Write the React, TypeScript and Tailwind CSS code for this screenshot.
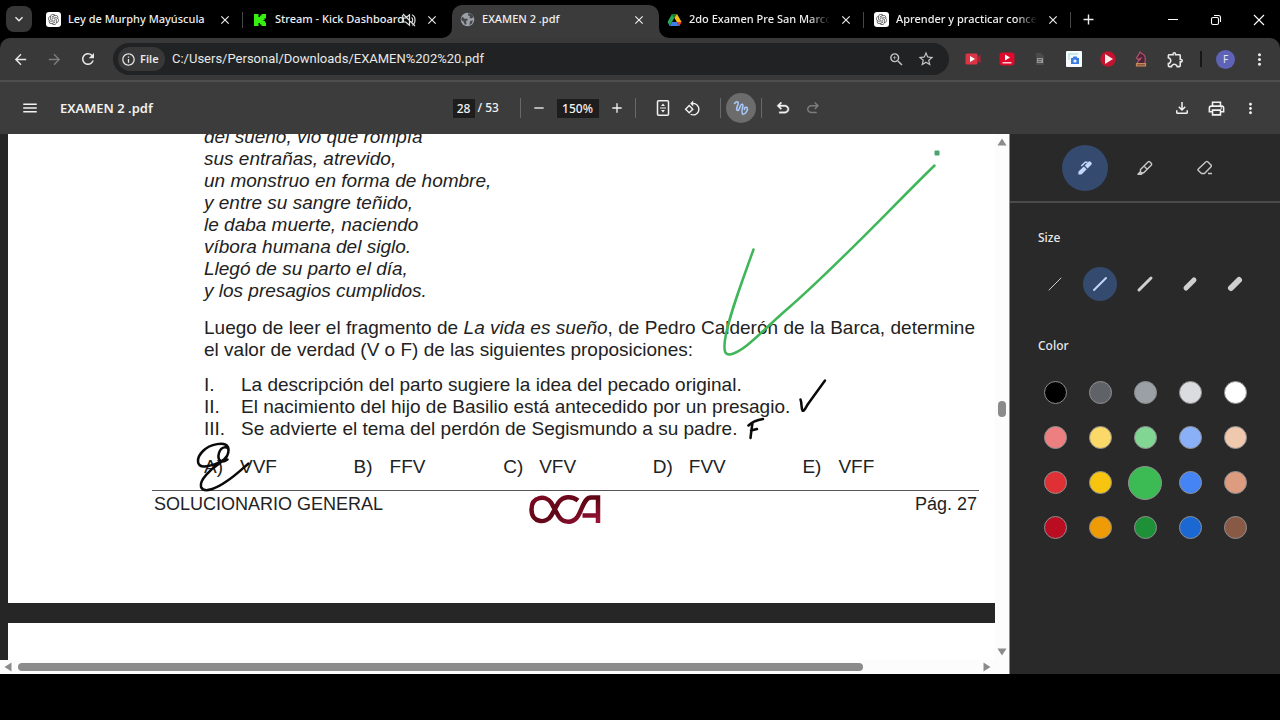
import type { ReactNode } from "react";
import {
  MdAdd,
  MdArrowBack,
  MdArrowForward,
  MdClose,
  MdKeyboardArrowDown,
  MdMenu,
  MdMoreVert,
  MdOutlineExtension,
  MdOutlineFileDownload,
  MdOutlineInfo,
  MdOutlinePrint,
  MdRefresh,
  MdRemove,
  MdRotate90DegreesCcw,
  MdStarBorder,
  MdZoomIn,
} from "react-icons/md";
import { RiOpenaiFill } from "react-icons/ri";

const uiFont = "font-['Noto_Sans','Open_Sans',sans-serif]";

function OpenAiIcon() {
  return (
    <span className="flex size-[15px] items-center justify-center rounded-[3px] bg-white text-[#555]">
      <RiOpenaiFill size={13} />
    </span>
  );
}

function KickIcon() {
  return (
    <svg width="14" height="14" viewBox="0 0 14 14" fill="#35f011">
      <path d="M1 1h4.500v3H7V2.500h1.500V1H13v4.500h-1.500V7H10.500v1H12v1.500h1V13H8.500v-1.500H7V10H5.500v3H1z" />
    </svg>
  );
}

function GlobeIcon() {
  return (
    <svg width="15" height="15" viewBox="0 0 15 15">
      <circle cx="7.500" cy="7.500" r="6.800" fill="#9aa0a6" />
      <path
        d="M2 4.500l3 2.500 2-.5 1 1.500-2 1 .5 2.500L5 13 3.500 9.500 1.200 8zM8.500 1l-.5 2.500 2 .5-.5 2 2 .5 2.200-1.500L12 2.500zM10 9l3-.5-1.500 3.500-2 1z"
        fill="#45484b"
      />
    </svg>
  );
}

function DriveIcon() {
  return (
    <svg width="15" height="14" viewBox="0 0 15 14">
      <path d="M5 1L0.500 9l2.200 4L7.400 4.800z" fill="#27a85a" />
      <path d="M5 1h5L7.400 4.800z" fill="#168038" />
      <path d="M10 1l4.600 8h-4.800L7.400 4.800z" fill="#fbbf14" />
      <path d="M5 9h4.800l2.600 4H2.700z" fill="#3f7fe8" />
      <path d="M9.800 9h4.800l-2.200 4z" fill="#e84335" />
    </svg>
  );
}

function MuteIcon() {
  return (
    <svg
      className="shrink-0"
      width="14"
      height="14"
      viewBox="0 0 14 14"
      fill="none"
      stroke="#dedede"
      strokeWidth="1.200"
    >
      <path d="M1.500 5h2.200L7.500 1.800v10.400L3.700 9H1.500zM9.500 4.500c1.600 1.200 1.600 3.800 0 5M10 1.800c4 1.800 4 8.600 0 10.400M1 1l12 12" />
    </svg>
  );
}

type TabProps = {
  icon: ReactNode;
  title: string;
  active?: boolean;
  muted?: boolean;
  divider?: boolean;
  fade?: boolean;
};

function Tab({ icon, title, active, muted, divider, fade }: TabProps) {
  return (
    <div
      className={`relative flex h-[33px] w-[207px] items-center pr-[2px] pb-1 pl-2 ${active ? "rounded-t-[10px] bg-[#3b3b3b]" : ""}`}
    >
      {active && (
        <>
          <svg className="absolute bottom-0 -left-[10px]" width="10" height="10" fill="#3b3b3b">
            <path d="M10 0v10H0A10 10 0 0 0 10 0z" />
          </svg>
          <svg className="absolute -right-[10px] bottom-0" width="10" height="10" fill="#3b3b3b">
            <path d="M0 0v10h10A10 10 0 0 1 0 0z" />
          </svg>
        </>
      )}
      <span className="w-[22px] shrink-0">{icon}</span>
      <span className={`min-w-0 flex-1 whitespace-nowrap ${fade ? "mask-r-from-85%" : ""}`}>{title}</span>
      {muted && <MuteIcon />}
      <button aria-label={`Cerrar ${title}`} className="mr-[9px] ml-2 flex w-4 shrink-0 justify-center">
        <MdClose size={14} />
      </button>
      <span className={`h-4 w-px ${divider ? "bg-[#474747]" : ""}`} />
    </div>
  );
}

function TabStrip() {
  return (
    <header className="flex h-[38px] items-end bg-black pl-[6px] text-[11px] font-medium">
      <button
        aria-label="Buscar pestañas"
        className="mr-[6px] mb-[6px] flex size-[26px] items-center justify-center rounded-lg bg-[#373737]"
      >
        <MdKeyboardArrowDown size={16} />
      </button>
      <Tab icon={<OpenAiIcon />} title="Ley de Murphy Mayúscula" divider />
      <Tab icon={<KickIcon />} title="Stream - Kick Dashboard" muted />
      <Tab icon={<GlobeIcon />} title="EXAMEN 2 .pdf" active />
      <Tab icon={<DriveIcon />} title="2do Examen Pre San Marcos" divider fade />
      <Tab icon={<OpenAiIcon />} title="Aprender y practicar concep" divider fade />
      <button aria-label="Nueva pestaña" className="mb-1 flex h-[29px] w-[30px] items-center justify-center">
        <MdAdd size={17} />
      </button>
      <div className="mb-1 ml-auto flex h-[29px]">
        <button aria-label="Minimizar" className="flex w-[43px] items-center justify-center">
          <svg width="12" height="12" stroke="#fff" strokeWidth="1">
            <path d="M1 5.500h10" />
          </svg>
        </button>
        <button aria-label="Restaurar" className="flex w-[43px] items-center justify-center">
          <svg width="12" height="12" fill="none" stroke="#fff" strokeWidth="1.100">
            <rect x="1.500" y="3.500" width="7" height="7" rx="1.500" />
            <path d="M4 1.500h4.500a2 2 0 0 1 2 2V8" />
          </svg>
        </button>
        <button aria-label="Cerrar ventana" className="flex w-[43px] items-center justify-center">
          <svg width="12" height="12" stroke="#fff" strokeWidth="1.100">
            <path d="M1 1l10 10M11 1L1 11" />
          </svg>
        </button>
      </div>
    </header>
  );
}

function Extensions() {
  const cell = "flex h-6 items-center justify-center";
  return (
    <div className="grid w-[236px] shrink-0 grid-cols-7">
      <button aria-label="Grabador de vídeo" className={cell}>
        <svg width="16" height="12" viewBox="0 0 16 12">
          <rect x="0.500" y="0.500" width="12" height="11" rx="1.500" fill="#dc3545" />
          <path d="M13 4l2.500-2.500v9L13 8z" fill="#b32234" />
          <path d="M5 3l5 3-5 3z" fill="#fff" />
        </svg>
      </button>
      <button aria-label="Descargador de vídeo" className={cell}>
        <svg width="16" height="14" viewBox="0 0 16 14">
          <rect x="0.500" y="0.500" width="15" height="13" rx="3" fill="#dd0a2c" />
          <path d="M6 2.500l5 3-5 3z" fill="#fff" />
          <path d="M3.500 10.800h9" stroke="#fff" strokeWidth="1.200" />
        </svg>
      </button>
      <button aria-label="Documentos" className={cell}>
        <svg width="10" height="14" viewBox="0 0 10 14">
          <path d="M1 1h5l3 3v9H1z" fill="#4b4b4b" />
          <path d="M2 6h6v5H2z" fill="#999" />
          <path d="M3 7.500h4M3 9.500h3" stroke="#555" />
        </svg>
      </button>
      <button aria-label="Captura de pantalla" className={cell}>
        <svg width="16" height="16" viewBox="0 0 16 16">
          <rect width="16" height="16" rx="1" fill="#f8fbff" />
          <path d="M3 9V3h9" fill="none" stroke="#b9e6e0" strokeWidth="1.500" />
          <path d="M5 7h1.500l1-1.500h3l1 1.500H13v6H5z" fill="#3b7ce4" />
          <circle cx="9" cy="10" r="1.600" fill="#e8f1ff" />
        </svg>
      </button>
      <button aria-label="Reproductor" className={cell}>
        <svg width="16" height="16" viewBox="0 0 16 16">
          <circle cx="8" cy="8" r="7.700" fill="#c3142f" />
          <path d="M5 3l8 5-8 5z" fill="#ffeaea" />
        </svg>
      </button>
      <button aria-label="Ajedrez" className={cell}>
        <svg width="14" height="16" viewBox="0 0 14 16" fill="none" strokeWidth="1.200">
          <path
            d="M3.500 12c0-2.500 3-3 3.500-5L4 8.500 2.500 7 5 3l1-2 1.500 1.500C11 3 12 7 10.800 12"
            fill="#4a2438"
            stroke="#b8506c"
          />
          <path d="M2.500 12.500h9v2.500h-9z" fill="#8d5a3c" stroke="#c98a5e" />
        </svg>
      </button>
      <button aria-label="Extensiones" className={cell}>
        <MdOutlineExtension size={19} />
      </button>
    </div>
  );
}

function AddressBar() {
  return (
    <div className="bg-black">
      <div className="flex h-[44px] items-center rounded-t-[10px] border-b-2 border-[#4e4e4e] bg-[#393939] text-[#e8e8e8]">
        <button aria-label="Atrás" className="ml-[3px] flex w-[34px] justify-center">
          <MdArrowBack size={17} />
        </button>
        <button aria-label="Adelante" disabled className="flex w-[34px] justify-center text-[#7c7c7c]">
          <MdArrowForward size={17} />
        </button>
        <button aria-label="Recargar" className="flex w-[34px] justify-center">
          <MdRefresh size={18} />
        </button>
        <div className="ml-2 flex h-8 min-w-0 flex-1 items-center rounded-full bg-[#202223] pl-[5px]">
          <button className="flex h-6 w-[47px] shrink-0 items-center gap-1 rounded-full bg-[#383838] pl-[3px] text-[11px] font-semibold">
            <MdOutlineInfo size={15} />
            File
          </button>
          <input
            aria-label="Dirección"
            defaultValue="C:/Users/Personal/Downloads/EXAMEN%202%20.pdf"
            className="ml-[7px] min-w-0 flex-1 bg-transparent font-[Roboto,sans-serif] text-[13px] outline-none"
          />
          <button aria-label="Zoom" className="flex w-[30px] justify-center text-[#c4c4c4]">
            <MdZoomIn size={17} />
          </button>
          <button aria-label="Añadir a favoritos" className="mr-2 flex w-[30px] justify-center text-[#c4c4c4]">
            <MdStarBorder size={18} />
          </button>
        </div>
        <div className="ml-[7px]">
          <Extensions />
        </div>
        <span className="ml-2 h-4 w-[2px] bg-[#161616]" />
        <button
          aria-label="Perfil"
          className="ml-[14px] flex size-[19px] items-center justify-center rounded-full bg-[#5f63b8] text-[10px]"
        >
          F
        </button>
        <button aria-label="Menú" className="mr-[11px] ml-[14px] flex w-5 justify-center">
          <MdMoreVert size={19} />
        </button>
      </div>
    </div>
  );
}

function PdfToolbar() {
  const btn = "flex h-[30px] w-[30px] items-center justify-center";
  const sep = "h-5 w-px bg-[#686868]";
  return (
    <div className="grid h-[52px] grid-cols-[1fr_auto_1fr] items-center bg-[#3c3c3c] text-[#f1f1f1]">
      <div className="flex items-center">
        <button aria-label="Barra lateral" className="ml-[15px] flex h-[30px] w-[30px] items-center justify-center">
          <MdMenu size={18} />
        </button>
        <h1 className="ml-[15px] pt-px text-[13px] font-semibold">EXAMEN 2 .pdf</h1>
      </div>
      <div className="flex items-center text-[12px] font-medium">
        <input
          aria-label="Página"
          defaultValue="28"
          className="h-[19px] w-[22px] bg-[#1d1d1d] text-center outline-none"
        />
        <span className="w-[45px] pl-[3px]">/ 53</span>
        <span className={sep} />
        <button aria-label="Reducir" className="flex w-9 justify-center">
          <MdRemove size={16} />
        </button>
        <input
          aria-label="Nivel de zoom"
          defaultValue="150%"
          className="h-[19px] w-[42px] bg-[#1d1d1d] text-center outline-none"
        />
        <button aria-label="Ampliar" className="flex w-9 justify-center">
          <MdAdd size={16} />
        </button>
        <span className={`${sep} mr-3`} />
        <button aria-label="Ajustar a la página" className={btn}>
          <svg width="14" height="18" viewBox="0 0 14 18" fill="none" stroke="#f1f1f1" strokeWidth="1.500">
            <rect x="1.500" y="1.800" width="11" height="14.400" rx="1" />
            <path d="M4 9h6" strokeWidth="1" />
            <path d="M7 4.500L9 7H5zM7 13.500L5 11h4z" fill="#f1f1f1" stroke="none" />
          </svg>
        </button>
        <button aria-label="Girar" className={btn}>
          <MdRotate90DegreesCcw size={17} />
        </button>
        <span className={`${sep} mr-[5px] ml-3`} />
        <button aria-label="Anotar" className="flex size-[30px] items-center justify-center rounded-full bg-[#6c6c6c]">
          <svg
            width="16"
            height="16"
            viewBox="0 0 16 16"
            fill="none"
            stroke="#a8c7fa"
            strokeWidth="1.600"
            strokeLinecap="round"
          >
            <path d="M1.500 3.500C3 1.500 5.500 1 5.200 3.200C5 5.500 2.500 8.800 4 10.200C5.800 11.500 6.800 7.500 7.600 5.500C8.500 3.500 10.500 3.800 9.800 6.500C9.200 9 8 13.500 10 14.200C12.500 14.500 15.200 9.800 14.200 7.800C13.200 6.200 10.800 8 11.500 9.500" />
          </svg>
        </button>
        <span className={`${sep} mr-[6px] ml-[5px]`} />
        <button aria-label="Deshacer" className={btn}>
          <svg width="18" height="18" viewBox="0 0 24 24" fill="currentColor" stroke="currentColor" strokeWidth="0.500">
            <path d="M7 19v-2h7.100q1.575 0 2.738-1T18 13.500 16.838 11 14.100 10H7.800l2.600 2.600L9 14 4 9l5-5 1.400 1.400L7.800 8h6.300q2.425 0 4.163 1.575T20 13.500t-1.737 3.925T14.100 19z" />
          </svg>
        </button>
        <button aria-label="Rehacer" disabled className={`${btn} text-[#7c7c7c]`}>
          <svg width="18" height="18" viewBox="0 0 24 24" fill="currentColor">
            <path d="M17 19v-2H9.900q-1.575 0-2.738-1T6 13.500 7.162 11 9.900 10h6.300l-2.600 2.600L15 14l5-5-5-5-1.400 1.400L16.200 8H9.900Q7.475 8 5.737 9.575T4 13.500t1.737 3.925T9.900 19z" />
          </svg>
        </button>
      </div>
      <div className="flex items-center justify-end pr-[13px]">
        <button aria-label="Descargar" className="flex w-[34px] justify-center">
          <MdOutlineFileDownload size={18} />
        </button>
        <button aria-label="Imprimir" className="flex w-[34px] justify-center">
          <MdOutlinePrint size={19} />
        </button>
        <button aria-label="Más acciones" className="flex w-[34px] justify-center">
          <MdMoreVert size={17} />
        </button>
      </div>
    </div>
  );
}

const verses = [
  "del sueño, vio que rompía",
  "sus entrañas, atrevido,",
  "un monstruo en forma de hombre,",
  "y entre su sangre teñido,",
  "le daba muerte, naciendo",
  "víbora humana del siglo.",
  "Llegó de su parto el día,",
  "y los presagios cumplidos.",
];

const statements = [
  ["I.", "La descripción del parto sugiere la idea del pecado original."],
  ["II.", "El nacimiento del hijo de Basilio está antecedido por un presagio."],
  ["III.", "Se advierte el tema del perdón de Segismundo a su padre."],
];

const options = [
  ["A)", "VVF"],
  ["B)", "FFV"],
  ["C)", "VFV"],
  ["D)", "FVV"],
  ["E)", "VFF"],
];

function OcaLogo() {
  return (
    <svg width="72" height="32" viewBox="0 0 72 32" fill="none" strokeWidth="4.500">
      <defs>
        <linearGradient id="oca" x1="0" y1="0" x2="1" y2="1">
          <stop offset="0" stopColor="#7d0a22" />
          <stop offset="0.500" stopColor="#5f0716" />
          <stop offset="1" stopColor="#a01238" />
        </linearGradient>
      </defs>
      <path
        d="M49 6.500C43 1.500 34 2 29.500 8.500L22 22C17 30 2.500 29 2.500 15.500S17 1 22 8.500L29.500 22C33.500 29 43 29.500 48 23.500C53 17 54.500 3.500 62 3.500H69V29M53.500 21.500H69"
        stroke="url(#oca)"
      />
    </svg>
  );
}

function Ink() {
  return (
    <svg
      className="pointer-events-none absolute top-0 left-0"
      width="987"
      height="477"
      viewBox="8 126 987 477"
      fill="none"
      strokeLinecap="round"
      strokeLinejoin="round"
    >
      <path
        d="M753.500 249.500C742 282 728 318 725 340C723.500 351 725 355 730 354.500C744 352 762 331 785 311C835 268 885 214 934.500 165.500"
        stroke="#3fb659"
        strokeWidth="2.500"
      />
      <rect x="934.500" y="150.500" width="5" height="5" rx="1" fill="#4da36e" />
      <g stroke="#0a0a0a" strokeWidth="2.500">
        <path d="M800.500 399.500C802 403 801 408 802.500 410.500C804 412 806 407 808 404L825 380.500" />
        <path d="M748.500 425.500C752 422 757 420 763 419M752.500 423C751.500 429 751 434 750.500 438M751 430.500L757 429" />
        <path d="M227.500 459.500C221 464 217 460 219 453C221 446 228 446 228.500 450C229 459 218 465 205 466.500C196 467 196 458 203 451C210 444 225 441 228 447C230 453 226 459 220 463C211 469 199 480 201 487C204 494 217 488 227 481C235 476 242 469 248.500 463.500" />
      </g>
    </svg>
  );
}

function PdfPage() {
  return (
    <article className="relative -mt-2 h-[477px] shrink-0 bg-white pr-4 pl-36 font-['Liberation_Sans',Arial,sans-serif] text-[19px] leading-[22px] text-[#222]">
      <div className="pr-1 pl-[52px]">
        <div className="italic">
          {verses.map((verse) => (
            <p key={verse}>{verse}</p>
          ))}
        </div>
        <p className="mt-[15px] w-[771px] text-justify">
          Luego de leer el fragmento de <i>La vida es sueño</i>, de Pedro Calderón de la Barca, determine el valor
          de verdad (V o F) de las siguientes proposiciones:
        </p>
        <ol className="mt-[13px]">
          {statements.map(([mark, text]) => (
            <li key={mark} className="flex">
              <span className="w-[37px]">{mark}</span>
              {text}
            </li>
          ))}
        </ol>
        <ul className="mt-4 grid w-[748px] grid-cols-5">
          {options.map(([mark, text]) => (
            <li key={mark} className="flex">
              <span className="w-9">{mark}</span>
              {text}
            </li>
          ))}
        </ul>
      </div>
      <footer className="mt-3 grid grid-cols-3 border-t border-[#555] px-[2px] text-[18px]">
        <span className="pt-[2px]">SOLUCIONARIO GENERAL</span>
        <span className="flex justify-center pt-[3px]">
          <OcaLogo />
        </span>
        <span className="pt-[2px] text-right">Pág. 27</span>
      </footer>
      <Ink />
    </article>
  );
}

function Viewer() {
  return (
    <main className="flex min-w-0 flex-1 flex-col border-r border-[#8a8a8a] bg-[#fcfcfc]">
      <div className="flex min-h-0 flex-1">
        <div className="flex min-w-0 flex-1 flex-col gap-5 overflow-hidden bg-[#262626] pl-2">
          <PdfPage />
          <div className="flex-1 bg-white" />
        </div>
        <div className="flex w-[14px] flex-col items-center py-1">
          <svg width="10" height="8" fill="#8b8b8b">
            <path d="M5 0.500L9.500 7.500h-9z" />
          </svg>
          <span className="flex-[255]" />
          <span className="h-4 w-2 rounded-full bg-[#8b8b8b]" />
          <span className="flex-[231]" />
          <svg width="10" height="8" fill="#8b8b8b">
            <path d="M0.500 0.500h9L5 7.500z" />
          </svg>
        </div>
      </div>
      <div className="flex h-[14px] items-center pr-[18px] pl-1">
        <svg width="8" height="10" fill="#8b8b8b">
          <path d="M7.500 0.500v9L0.500 5z" />
        </svg>
        <span className="ml-[6px] h-2 flex-[845] rounded-full bg-[#8b8b8b]" />
        <span className="flex-[120]" />
        <svg width="8" height="10" fill="#8b8b8b">
          <path d="M0.500 0.500v9l7-4.500z" />
        </svg>
      </div>
    </main>
  );
}

const strokeSizes = [1, 2, 3, 5, 6];

const swatches = [
  { name: "Negro", color: "bg-[#000000]" },
  { name: "Gris oscuro", color: "bg-[#5f6368]" },
  { name: "Gris", color: "bg-[#9aa0a6]" },
  { name: "Gris claro", color: "bg-[#dadce0]" },
  { name: "Blanco", color: "bg-[#ffffff]" },
  { name: "Rojo claro", color: "bg-[#ee7f80]" },
  { name: "Amarillo claro", color: "bg-[#fbd968]" },
  { name: "Verde claro", color: "bg-[#82d694]" },
  { name: "Azul claro", color: "bg-[#8ab0f8]" },
  { name: "Crema", color: "bg-[#eec9ae]" },
  { name: "Rojo", color: "bg-[#df3036]" },
  { name: "Amarillo", color: "bg-[#f7c510]" },
  { name: "Verde", color: "bg-[#3cba54]" },
  { name: "Azul", color: "bg-[#4584f4]" },
  { name: "Melocotón", color: "bg-[#dd9b80]" },
  { name: "Rojo oscuro", color: "bg-[#bb0d22]" },
  { name: "Naranja", color: "bg-[#ee9b05]" },
  { name: "Verde oscuro", color: "bg-[#1d9038]" },
  { name: "Azul oscuro", color: "bg-[#1b68d2]" },
  { name: "Marrón", color: "bg-[#885945]" },
];

function InkPanel() {
  const tool = "mx-[7px] mt-[11px] flex size-[46px] items-center justify-center rounded-full";
  return (
    <aside className="w-[270px] shrink-0 bg-[#29292a] text-[#e8e8e8]">
      <div className="flex h-[69px] justify-center border-b-2 border-[#4b4b4b]">
        <button aria-label="Bolígrafo" className={`${tool} bg-[#344a6e]`}>
          <svg width="16" height="16" viewBox="0 0 16 16" fill="#c3d7fb">
            <path d="M6.800 6.400l2.900 2.900-4.700 4.700a2 2 0 0 1-1.400.6H1.400v-2.300a2 2 0 0 1 .6-1.300z" />
            <path d="M7.700 5.500l2.900 2.900 3.700-3.700a1.500 1.500 0 0 0 0-2.100l-.8-.8a1.500 1.500 0 0 0-2.100 0z" />
            <path d="M4.300 6L8.200 2.200h2.300" fill="none" stroke="#c3d7fb" strokeWidth="1.400" />
          </svg>
        </button>
        <button aria-label="Rotulador" className={tool}>
          <svg width="16" height="16" viewBox="0 0 16 16" fill="none" stroke="#c9c9c9" strokeWidth="1.400" strokeLinejoin="round">
            <path d="M3.500 9.500L11 2a1.500 1.500 0 0 1 2 0l1.200 1.200a1.500 1.500 0 0 1 0 2L6.700 12.700H3.500zM7 6l3.200 3.200M3.500 11.500L1 14.300h3.500l1.200-1.600" />
          </svg>
        </button>
        <button aria-label="Borrador" className={tool}>
          <svg width="16" height="16" viewBox="0 0 16 16" fill="none" stroke="#c9c9c9" strokeWidth="1.400" strokeLinejoin="round">
            <path d="M1.300 9L9 1.700a1.200 1.200 0 0 1 1.700 0L14 5a1.200 1.200 0 0 1 0 1.700L7.500 13.500h-3L1.300 10.500a1 1 0 0 1 0-1.500zM11 13.500h4" />
          </svg>
        </button>
      </div>
      <section className="pr-[22px] pl-[23px]">
        <h2 className="mt-[26px] ml-[5px] text-[12px] leading-[18px] font-medium">Size</h2>
        <div className="mt-5 grid grid-cols-5">
          {strokeSizes.map((size) => (
            <button
              key={size}
              aria-label={`Grosor ${size}`}
              className={`flex size-[34px] items-center justify-center rounded-full ml-[5px] ${size === 2 ? "bg-[#344a6e]" : ""}`}
            >
              <svg width="18" height="18" stroke={size === 2 ? "#c3d7fb" : "#cfcfcf"} strokeWidth={size} strokeLinecap="round">
                {size > 4 ? <path d="M5 13L13 5" /> : <path d="M3 15L15 3" />}
              </svg>
            </button>
          ))}
        </div>
      </section>
      <section className="pr-[22px] pl-[23px]">
        <h2 className="mt-9 ml-[5px] text-[12px] leading-[18px] font-medium">Color</h2>
        <div className="mt-[15px] grid auto-rows-[45px] grid-cols-[repeat(5,44px)] place-items-center gap-x-px">
          {swatches.map(({ name, color }) => (
            <button
              key={name}
              aria-label={name}
              className={`rounded-full border border-[#8f8f8f] ${name === "Verde" ? "size-[34px]" : "size-[23px]"} ${color}`}
            />
          ))}
        </div>
      </section>
    </aside>
  );
}

export default function App() {
  return (
    <div className={`flex h-screen flex-col bg-black pb-[46px] text-[#eeeeee] ${uiFont}`}>
      <TabStrip />
      <AddressBar />
      <PdfToolbar />
      <div className="flex min-h-0 flex-1 overflow-hidden">
        <Viewer />
        <InkPanel />
      </div>
    </div>
  );
}
